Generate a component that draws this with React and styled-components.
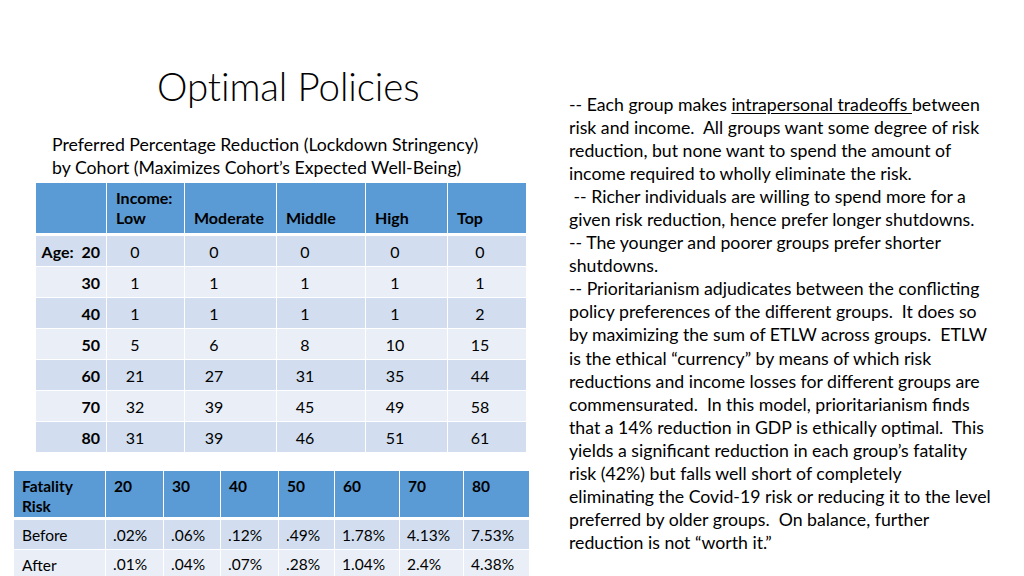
import React from 'react';
import styled, { createGlobalStyle } from 'styled-components';

const GlobalStyle = createGlobalStyle`
  html, body {
    margin: 0;
    padding: 0;
    background: #ffffff;
  }
  body {
    font-family: Lato, "Open Sans", "Liberation Sans", sans-serif;
    color: #000000;
  }
`;

const Slide = styled.div`
  width: 1024px;
  height: 576px;
  overflow: hidden;
  background: #ffffff;
  display: grid;
  grid-template-columns: 550px 1fr;
`;

const LeftPane = styled.div`
  display: flex;
  flex-direction: column;
  padding-top: 64px;
`;

const Title = styled.h1`
  margin: 0 0 0 157px;
  font-size: 38.5px;
  font-weight: 300;
  line-height: 44px;
  letter-spacing: -0.1px;
`;

const Caption = styled.p`
  margin: 26px 0 0 52px;
  font-size: 17.7px;
  line-height: 22.5px;
  white-space: nowrap;
`;

const Grid = styled.div`
  display: grid;
  grid-template-columns: ${p => p.$cols};
  gap: 1px;
  margin-left: ${p => p.$left}px;
  margin-top: ${p => p.$top}px;
  background: #ffffff;
  font-size: ${p => p.$size}px;
`;

const HeadCell = styled.div`
  background: #5b9bd5;
  height: ${p => p.$h}px;
  margin-bottom: 2px;
  padding: ${p => (p.$bottom ? '0 6px 5px 9px' : '5px 6px 0 8px')};
  box-sizing: border-box;
  display: flex;
  flex-direction: column;
  justify-content: ${p => (p.$bottom ? 'flex-end' : 'flex-start')};
  font-weight: 700;
  line-height: 20px;
  color: #000000;
  white-space: nowrap;
`;

const Cell = styled.div`
  background: ${p => (p.$odd ? '#d2deef' : '#eaeff7')};
  height: ${p => p.$h}px;
  box-sizing: border-box;
  display: flex;
  align-items: center;
  justify-content: ${p => p.$align || 'center'};
  padding: ${p => p.$pad || '0'};
  font-weight: ${p => (p.$bold ? 700 : 400)};
  white-space: pre;
`;

const RightPane = styled.div`
  padding: 93px 0 0 19px;
  font-size: 17.7px;
  line-height: 23.05px;
`;

const Line = styled.div`
  white-space: pre;
`;

const Under = styled.span`
  text-decoration: underline;
  text-underline-offset: 2px;
`;

const incomeCols = ['Moderate', 'Middle', 'High', 'Top'];
const dataPad = ['0 21px 0 0', '0 33px 0 0', '0 32px 0 0', '0 23px 0 0', '0 14px 0 0'];

const cohorts = [
  ['Age:  20', [0, 0, 0, 0, 0]],
  ['30', [1, 1, 1, 1, 1]],
  ['40', [1, 1, 1, 1, 2]],
  ['50', [5, 6, 8, 10, 15]],
  ['60', [21, 27, 31, 35, 44]],
  ['70', [32, 39, 45, 49, 58]],
  ['80', [31, 39, 46, 51, 61]],
];

const ages = ['20', '30', '40', '50', '60', '70', '80'];
const risk = [
  ['Before', ['.02%', '.06%', '.12%', '.49%', '1.78%', '4.13%', '7.53%']],
  ['After', ['.01%', '.04%', '.07%', '.28%', '1.04%', '2.4%', '4.38%']],
];

const notes = [
  'risk and income.  All groups want some degree of risk',
  'reduction, but none want to spend the amount of',
  'income required to wholly eliminate the risk.',
  ' -- Richer individuals are willing to spend more for a',
  'given risk reduction, hence prefer longer shutdowns.',
  '-- The younger and poorer groups prefer shorter',
  'shutdowns.',
  '-- Prioritarianism adjudicates between the conflicting',
  'policy preferences of the different groups.  It does so',
  'by maximizing the sum of ETLW across groups.  ETLW',
  'is the ethical \u201ccurrency\u201d by means of which risk',
  'reductions and income losses for different groups are',
  'commensurated.  In this model, prioritarianism finds',
  'that a 14% reduction in GDP is ethically optimal.  This',
  'yields a significant reduction in each group\u2019s fatality',
  'risk (42%) but falls well short of completely',
  'eliminating the Covid-19 risk or reducing it to the level',
  'preferred by older groups.  On balance, further',
  'reduction is not \u201cworth it.\u201d',
];

const App = () => (
  <>
    <GlobalStyle />
    <Slide>
      <LeftPane>
        <Title>Optimal Policies</Title>
        <Caption>
          Preferred Percentage Reduction (Lockdown Stringency)
          <br />
          by Cohort (Maximizes Cohort&rsquo;s Expected Well-Being)
        </Caption>

        <Grid $cols="70px 77px 91px 88px 81px 78px" $left={36} $top={4} $size={16}>
          <HeadCell $h={50} $bottom />
          <HeadCell $h={50} $bottom>
            <span>Income:</span>
            <span>Low</span>
          </HeadCell>
          {incomeCols.map(c => (
            <HeadCell key={c} $h={50} $bottom>{c}</HeadCell>
          ))}
          {cohorts.map(([label, vals], i) => (
            <React.Fragment key={label}>
              <Cell $h={30} $odd={i % 2 === 0} $bold $align="flex-end" $pad="0 6px 0 0">
                {label}
              </Cell>
              {vals.map((v, j) => (
                <Cell key={j} $h={30} $odd={i % 2 === 0} $pad={dataPad[j]}>
                  {v}
                </Cell>
              ))}
            </React.Fragment>
          ))}
        </Grid>

        <Grid $cols="91px 57px 56px 57px 55px 64px 63px 65px" $left={14} $top={19} $size={15.5}>
          <HeadCell $h={46}>
            <span>Fatality</span>
            <span>Risk</span>
          </HeadCell>
          {ages.map(a => (
            <HeadCell key={a} $h={46}>{a}</HeadCell>
          ))}
          {risk.map(([label, vals], i) => (
            <React.Fragment key={label}>
              <Cell $h={29} $odd={i % 2 === 0} $align="flex-start" $pad="0 0 0 8px">
                {label}
              </Cell>
              {vals.map((v, j) => (
                <Cell key={j} $h={i === 1 ? 27 : 29} $odd={i % 2 === 0} $align="flex-start" $pad="0 0 0 7px">
                  {v}
                </Cell>
              ))}
            </React.Fragment>
          ))}
        </Grid>
      </LeftPane>

      <RightPane>
        <Line>
          -- Each group makes <Under>intrapersonal tradeoffs </Under>between
        </Line>
        {notes.map((n, i) => (
          <Line key={i}>{n}</Line>
        ))}
      </RightPane>
    </Slide>
  </>
);

export default App;
